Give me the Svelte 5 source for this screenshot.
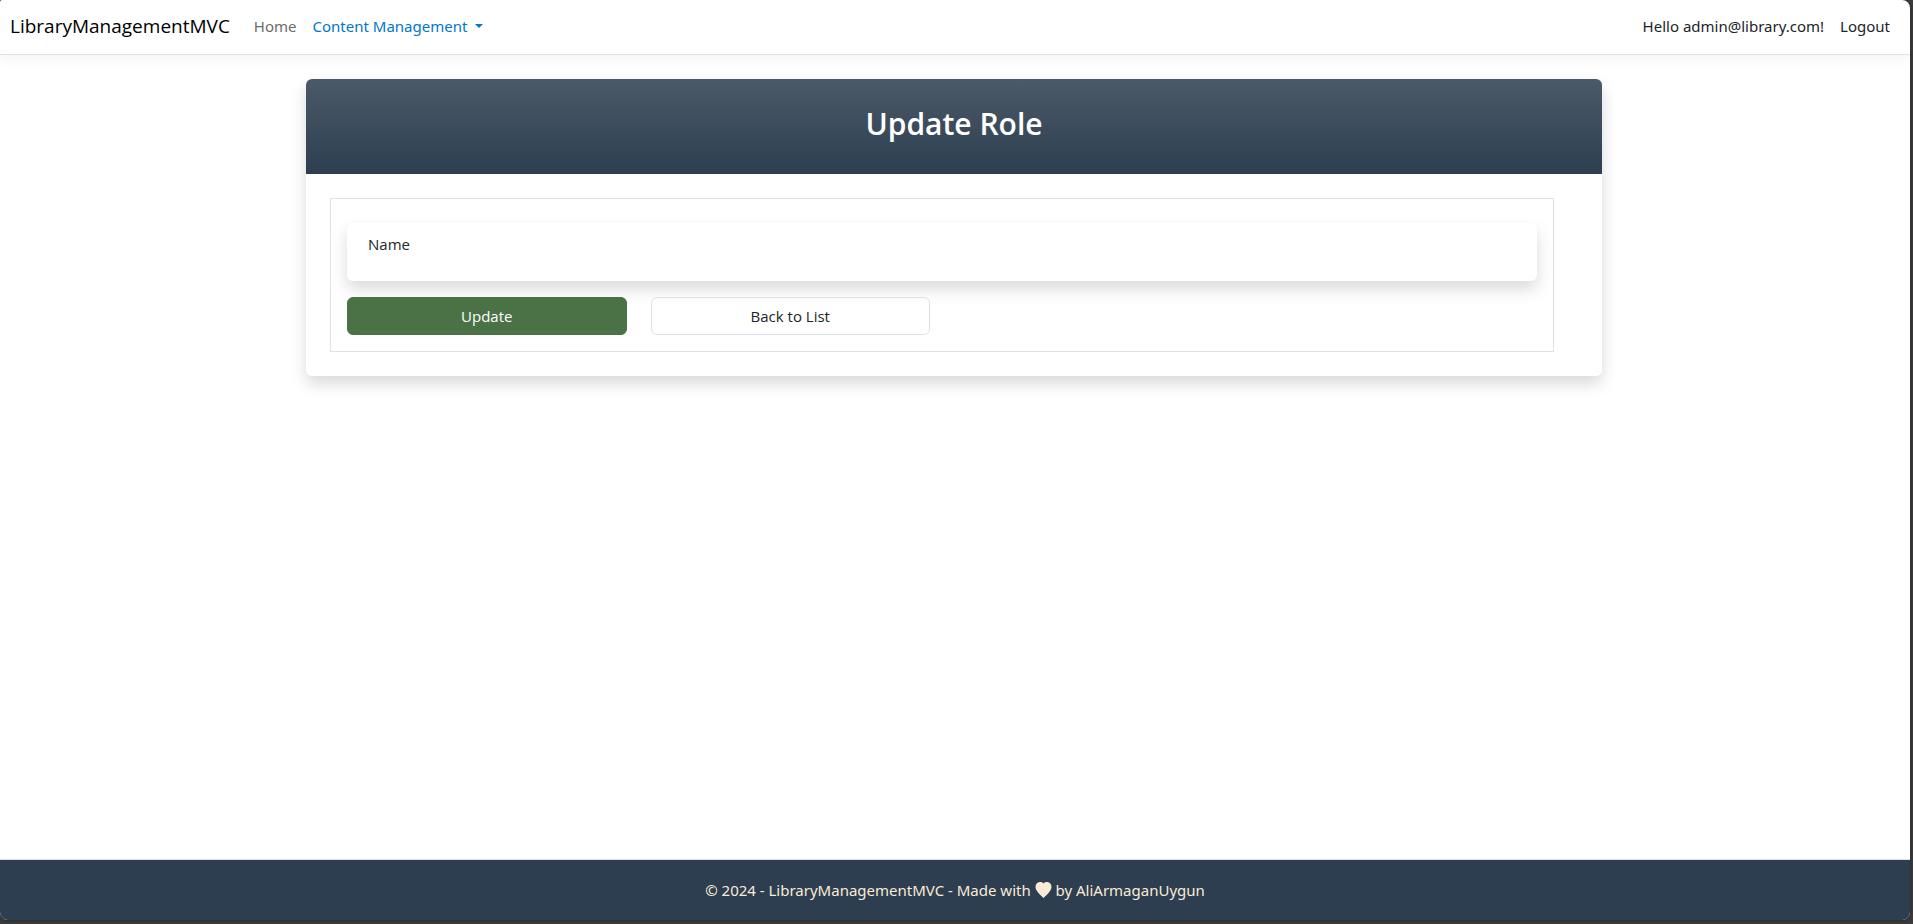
<script>
  let name = $state('');
  const submit = (event) => event.preventDefault();
</script>

<div class="page">
  <header>
    <nav class="navbar" aria-label="Main">
      <a class="brand" href="#home">LibraryManagementMVC</a>
      <div class="links">
        <a class="muted" href="#home">Home</a>
        <button class="dropdown" type="button" aria-haspopup="true">
          Content Management <span class="caret"></span>
        </button>
      </div>
      <div class="links account">
        <a href="#account">Hello admin@library.com!</a>
        <button type="button">Logout</button>
      </div>
    </nav>
  </header>

  <main>
    <section class="card">
      <div class="card-header">
        <h1>Update Role</h1>
      </div>
      <div class="card-body">
        <form onsubmit={submit}>
          <div class="field">
            <input id="role-name" type="text" bind:value={name} />
            <label for="role-name">Name</label>
          </div>
          <div class="actions">
            <button class="btn primary" type="submit">Update</button>
            <a class="btn outline" href="#roles">Back to List</a>
          </div>
        </form>
      </div>
    </section>
  </main>

  <footer>
    <p>
      © 2024 - LibraryManagementMVC - Made with
      <svg class="heart" viewBox="0 0 16 16" aria-hidden="true">
        <path d="M8 16C6.600 14.900 3.800 12.300 1.700 9.300C0.500 7.600 0 6.200 0 4.700C0 2.200 1.700 0 4.200 0C5.800 0 7.200 0.500 8 1.400C8.800 0.500 10.200 0 11.800 0C14.300 0 16 2.200 16 4.700C16 6.200 15.500 7.600 14.300 9.300C12.200 12.300 9.400 14.900 8 16Z" />
      </svg>
      by AliArmaganUygun
    </p>
  </footer>
</div>

<style>
  :global(body) {
    margin: 0;
    background: #3b3b3b;
  }

  .page,
  .page * {
    box-sizing: border-box;
  }

  .page {
    display: flex;
    flex-direction: column;
    min-height: calc(100vh - 4px);
    margin: 0 3px 4px 0;
    overflow: hidden;
    border-radius: 2px 8px 8px 8px;
    background: #fff;
    color: #212529;
    font-family: "Open Sans", "Noto Sans", sans-serif;
    font-size: 15px;
    line-height: 24px;
    box-shadow: 0 0 3px #222;
  }

  a {
    color: inherit;
    text-decoration: none;
  }

  button,
  input {
    font: inherit;
    color: inherit;
  }

  header {
    border-bottom: 1px solid #dee2e6;
    box-shadow: 0 4px 12px rgba(0, 0, 0, 0.05);
  }

  .navbar {
    display: flex;
    align-items: center;
    height: 54px;
    padding: 0 20px 2px 10px;
  }

  .brand {
    margin-right: 24px;
    color: #000;
    font-size: 19px;
  }

  .links {
    display: flex;
    gap: 16px;
    font-family: "Noto Sans", sans-serif;
  }

  .links button {
    padding: 0;
    border: 0;
    background: none;
    cursor: pointer;
  }

  .account {
    margin-left: auto;
  }

  .muted {
    color: #6c6c6c;
  }

  .links .dropdown {
    display: flex;
    align-items: center;
    gap: 8px;
    color: #0077cc;
  }

  .caret {
    border: 4px solid transparent;
    border-top-color: currentColor;
    border-bottom: 0;
  }

  main {
    flex: 1;
    width: 100%;
    max-width: 1320px;
    margin: 0 auto;
    padding: 24px 13px 24px 11px;
  }

  .card {
    border-radius: 6px;
    background: #fff;
    box-shadow: 0 8px 16px rgba(0, 0, 0, 0.15);
  }

  .card-header {
    padding: 24px 24px 30px;
    border-radius: 6px 6px 0 0;
    background: linear-gradient(#4b5a68, #2c3e50);
    color: #fff;
    text-align: center;
  }

  h1 {
    margin: 0;
    font-size: 30px;
    font-weight: 600;
    line-height: 41px;
  }

  .card-body {
    padding: 24px 48px 24px 24px;
  }

  form {
    padding: 24px 16px 16px;
    border: 1px solid #dee2e6;
  }

  .field {
    position: relative;
    margin-bottom: 16px;
  }

  .field input {
    display: block;
    width: 100%;
    height: 58px;
    padding: 26px 20px 8px;
    border: 0;
    border-radius: 6px;
    outline: 0;
    background: #fff;
    box-shadow: 0 8px 16px rgba(0, 0, 0, 0.15);
  }

  .field label {
    position: absolute;
    top: 9px;
    left: 21px;
  }

  .field input:focus + label {
    color: #0077cc;
  }

  .actions {
    position: relative;
    display: grid;
    grid-template-columns: repeat(4, 1fr);
    gap: 24px;
  }

  .btn {
    padding: 6px 12px;
    border: 1px solid #dee2e6;
    border-radius: 6px;
    text-align: center;
    cursor: pointer;
  }

  .primary {
    border-color: #4a7246;
    background: #4a7246;
    color: #fff;
  }

  footer {
    border-top: 1px solid #dee2e6;
    background: #2c3e50;
    color: #faebd7;
    font-family: "Noto Sans", sans-serif;
    text-align: center;
  }

  footer p {
    margin: 0;
    line-height: 60px;
  }

  .heart {
    width: 17px;
    height: 16px;
    fill: currentColor;
    vertical-align: -2px;
  }
</style>
